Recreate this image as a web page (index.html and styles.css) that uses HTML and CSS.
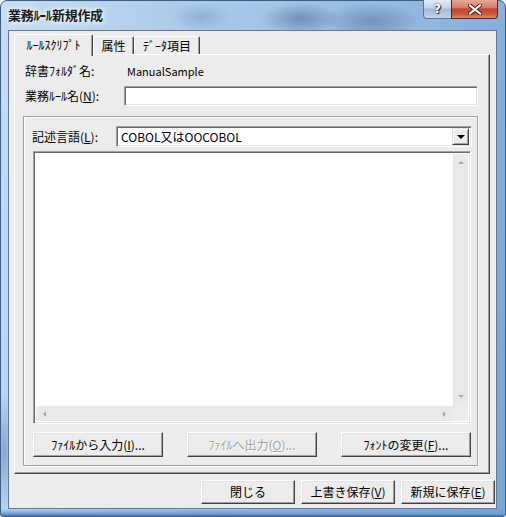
FILE: index.html
```html
<!DOCTYPE html>
<html lang="ja">
<head>
<meta charset="utf-8">
<title>業務ﾙｰﾙ新規作成</title>
<link rel="stylesheet" href="styles.css">
</head>
<body>
<div class="window">
  <div class="titlebar">
    <span class="title">業務ﾙｰﾙ新規作成</span>
    <div class="caption-btns">
      <div class="cbtn help">?</div>
      <div class="cbtn close">
        <svg width="14" height="11" viewBox="0 0 14 11"><path d="M2 1.5 L12 9.5 M12 1.5 L2 9.5" stroke="#3a1a14" stroke-width="4" stroke-linecap="square"/><path d="M2 1.5 L12 9.5 M12 1.5 L2 9.5" stroke="#fff" stroke-width="2.2" stroke-linecap="square"/></svg>
      </div>
    </div>
  </div>
  <div class="client">
    <div class="tabs">
      <div class="tab active">ﾙｰﾙｽｸﾘﾌﾟﾄ</div>
      <div class="tab t2">属性</div>
      <div class="tab t3">ﾃﾞｰﾀ項目</div>
    </div>
    <div class="tabpage">
      <div class="row r1"><span class="lbl">辞書ﾌｫﾙﾀﾞ名:</span><span class="val">ManualSample</span></div>
      <div class="row r2"><span class="lbl">業務ﾙｰﾙ名(<u>N</u>):</span><div class="input"></div></div>
      <div class="group">
        <div class="row r3"><span class="lbl lbl2">記述言語(<u>L</u>):</span>
          <div class="combo"><span class="combo-text">COBOL又はOOCOBOL</span><div class="dd"><i class="tri-down"></i></div></div>
        </div>
        <div class="editor">
          <div class="edit-area"></div>
          <div class="vscroll"><i class="arr up"></i><i class="arr down"></i></div>
          <div class="hscroll"><i class="arr left"></i><i class="arr right"></i></div>
          <div class="corner"></div>
        </div>
        <div class="btnrow">
          <div class="btn wide">ﾌｧｲﾙから入力(<u>I</u>)...</div>
          <div class="btn wide disabled">ﾌｧｲﾙへ出力(<u>O</u>)...</div>
          <div class="btn wide">ﾌｫﾝﾄの変更(<u>F</u>)...</div>
        </div>
      </div>
    </div>
    <div class="footer">
      <div class="btn foot">閉じる</div>
      <div class="btn foot">上書き保存(<u>V</u>)</div>
      <div class="btn foot">新規に保存(<u>E</u>)</div>
    </div>
  </div>
</div>
</body>
</html>
```

FILE: styles.css
```css
* { box-sizing: border-box; }
html, body { margin: 0; padding: 0; background: #ffffff; }
body {
  font-family: "Noto Sans CJK JP", "Noto Sans", sans-serif;
  font-size: 12px;
  color: #000;
  line-height: 1;
}
u { text-decoration: underline; text-underline-offset: 1px; }

.window {
  width: 506px;
  height: 517px;
  border: 1px solid #3f5d86;
  border-radius: 7px 7px 3px 3px;
  padding: 0 8px 7px 7px;
  display: flex;
  flex-direction: column;
  background:
    linear-gradient(to top, #3f6fae 0, #6f9bd0 2px, rgba(150,190,230,0) 7px),
    radial-gradient(ellipse 40px 16px at 300px 18px, rgba(55,85,125,.45), rgba(55,85,125,0)),
    radial-gradient(ellipse 50px 18px at 370px 20px, rgba(55,85,125,.4), rgba(55,85,125,0)),
    radial-gradient(ellipse 30px 14px at 200px 16px, rgba(70,100,140,.25), rgba(70,100,140,0)),
    radial-gradient(ellipse 10px 60px at 3px 450px, rgba(40,80,140,.35), rgba(40,80,140,0)),
    linear-gradient(100deg, #c7ddf2 0%, #a9c9e9 35%, #93b8df 70%, #7aa6d6 100%);
}

.titlebar {
  height: 29px;
  display: flex;
  align-items: center;
  padding-bottom: 2px;
}
.title {
  font-weight: bold;
  font-size: 13px;
  color: #1a1a1a;
  text-shadow: 0 0 4px #fff, 0 0 8px rgba(255,255,255,.9);
  letter-spacing: -0.3px;
}
.caption-btns {
  margin-left: auto;
  margin-right: -1px;
  align-self: flex-start;
  margin-top: -1px;
  display: flex;
}
.cbtn {
  height: 19px;
  display: flex;
  align-items: center;
  justify-content: center;
}
.help {
  width: 28px;
  border: 1px solid #5c759a;
  border-top: none;
  border-right: none;
  border-radius: 0 0 0 4px;
  background: linear-gradient(#e3ebf5 0%, #c3d3e6 45%, #a4b9d3 50%, #c2d4e8 100%);
  color: #fff;
  font-weight: bold;
  font-family: "DejaVu Sans", sans-serif;
  font-size: 12px;
  text-shadow: 0 0 2px #223, 1px 1px 1px #223;
}
.close {
  width: 47px;
  border: 1px solid #5e2219;
  border-top: none;
  border-radius: 0 0 4px 0;
  background: linear-gradient(#e6a898 0%, #d77d69 42%, #c2442c 50%, #cc5a40 80%, #e08a6c 100%);
}

.client {
  flex: 1;
  border: 1px solid #62789a;
  background: #ececec;
  padding: 3px 0 0 5px;
  display: flex;
  flex-direction: column;
}

.tabs {
  height: 20px;
  display: flex;
  align-items: flex-end;
}
.tab {
  height: 18px;
  border: 1px solid;
  border-bottom: none;
  border-color: #fff #404040 transparent #fff;
  box-shadow: inset -1px 0 #a0a0a0;
  border-radius: 2px 2px 0 0;
  background: #ececec;
  display: flex;
  align-items: center;
  justify-content: center;
  padding-top: 1px;
}
.tab.active {
  width: 79px;
  height: 22px;
  margin-bottom: -2px;
  position: relative;
  z-index: 1;
  padding-bottom: 2px;
}
.tab.t2 { width: 41px; }
.tab.t3 { width: 66px; }

.tabpage {
  width: 476px;
  height: 420px;
  border: 1px solid;
  border-color: #fff #404040 #404040 #fff;
  box-shadow: inset -1px -1px #a0a0a0;
  padding: 7px 11px 0 8px;
}

.row { display: flex; align-items: center; }
.r1 { height: 18px; padding-left: 2px; }
.r2 { height: 20px; margin-top: 6px; padding-left: 2px; }
.lbl { width: 99px; flex: none; white-space: nowrap; }
.lbl2 { width: 84px; }
.val { padding-left: 3px; font-size: 11px; }

.input, .combo, .editor {
  border: 1px solid;
  border-color: #a0a0a0 #fff #fff #a0a0a0;
  box-shadow: inset 1px 1px #696969, inset -1px -1px #e3e3e3;
  background: #fff;
}
.input { flex: 1; height: 20px; }

.group {
  margin-top: 10px;
  height: 350px;
  border: 1px solid #a0a0a0;
  box-shadow: inset 1px 1px #fff, 1px 1px #fff;
  padding: 9px 5px 0 8px;
}
.r3 { height: 21px; }
.combo {
  flex: 1;
  height: 21px;
  display: flex;
  align-items: center;
  padding: 2px;
}
.combo-text { flex: 1; padding-left: 2px; }
.dd {
  width: 17px;
  height: 17px;
  border: 1px solid;
  border-color: #e3e3e3 #404040 #404040 #e3e3e3;
  box-shadow: inset 1px 1px #fff, inset -1px -1px #a0a0a0;
  background: #ececec;
  display: flex;
  align-items: center;
  justify-content: center;
}
.tri-down {
  width: 0; height: 0;
  border-left: 4px solid transparent;
  border-right: 4px solid transparent;
  border-top: 4px solid #000;
  margin-top: 1px;
}

.editor {
  margin: 4px 1px 0 1px;
  height: 273px;
  padding: 2px;
  display: grid;
  grid-template-columns: 1fr 16px;
  grid-template-rows: 1fr 16px;
}
.edit-area { background: #fff; }
.vscroll, .hscroll, .corner { background: #e9e9e9; }
.vscroll {
  display: flex;
  flex-direction: column;
  justify-content: space-between;
  align-items: center;
  padding: 7px 0 7px;
  border-left: 1px solid #fff;
}
.hscroll {
  display: flex;
  justify-content: space-between;
  align-items: center;
  padding: 0 6px 0 7px;
  border-top: 1px solid #fff;
}
.corner { background: #ececec; }
.arr { width: 0; height: 0; display: block; }
.arr.up { border-left: 3px solid transparent; border-right: 3px solid transparent; border-bottom: 3px solid #a8a8a8; }
.arr.down { border-left: 3px solid transparent; border-right: 3px solid transparent; border-top: 3px solid #a8a8a8; }
.arr.left { border-top: 3px solid transparent; border-bottom: 3px solid transparent; border-right: 3px solid #a8a8a8; }
.arr.right { border-top: 3px solid transparent; border-bottom: 3px solid transparent; border-left: 3px solid #a8a8a8; }

.btn {
  border: 1px solid;
  border-color: #fff #404040 #404040 #fff;
  box-shadow: inset -1px -1px #a0a0a0, inset 1px 1px #e3e3e3;
  background: #ececec;
  display: flex;
  align-items: center;
  justify-content: center;
  white-space: nowrap;
}
.btnrow {
  margin: 8px 1px 0 1px;
  display: flex;
  justify-content: space-between;
}
.btn.wide { width: 130px; height: 25px; }
.btn.disabled { color: #a3a3a3; text-shadow: 1px 1px 0 #fff; }

.footer {
  margin-top: 6px;
  display: flex;
  justify-content: flex-end;
  gap: 6px;
  padding-right: 1px;
}
.btn.foot { width: 94px; height: 24px; }
```
